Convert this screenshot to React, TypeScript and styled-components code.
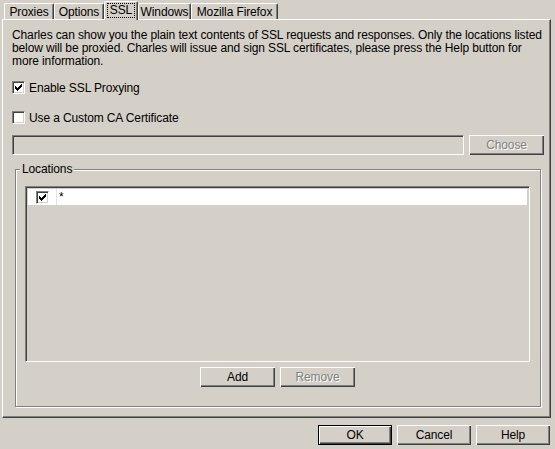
import React from "react";
import styled, { createGlobalStyle, css } from "styled-components";

const FACE = "#d4d0c8";
const SHADOW = "#808080";
const DARK = "#404040";

const GlobalStyle = createGlobalStyle`
  html, body {
    margin: 0;
    padding: 0;
    background: ${FACE};
  }
  body {
    font-family: "Liberation Sans", Arial, sans-serif;
    font-size: 12px;
    letter-spacing: -0.12px;
    color: #000;
  }
`;

const TABS = [
  { label: "Proxies", width: 50 },
  { label: "Options", width: 50 },
  { label: "SSL", width: 34, active: true },
  { label: "Windows", width: 53 },
  { label: "Mozilla Firefox", width: 87 },
];

const Window = styled.div`
  width: 555px;
  height: 449px;
  display: flex;
  flex-direction: column;
  overflow: hidden;
`;

const TabStrip = styled.div`
  display: flex;
  align-items: flex-end;
  height: 19px;
  padding-left: 4px;
  position: relative;
  z-index: 1;
`;

const Tab = styled.div<{ $active?: boolean; $w: number }>`
  box-sizing: border-box;
  width: ${(p) => p.$w}px;
  height: 16px;
  display: flex;
  align-items: center;
  justify-content: center;
  border-top: 1px solid #fff;
  border-left: 1px solid #fff;
  border-right: 1px solid ${DARK};
  border-radius: 2px 2px 0 0;
  box-shadow: inset -1px 0 0 ${SHADOW};
  background: ${FACE};
  white-space: nowrap;
  ${(p) =>
    p.$active &&
    css`
      height: 19px;
      margin-bottom: -1px;
      padding-bottom: 1px;
    `}
`;

const FocusText = styled.span`
  outline: 1px dotted #000;
  padding: 0 2px;
  line-height: 13px;
`;

const Panel = styled.div`
  box-sizing: border-box;
  margin-left: 2px;
  width: 549px;
  height: 399px;
  border-top: 1px solid #fff;
  border-left: 1px solid #fff;
  border-right: 1px solid ${DARK};
  border-bottom: 1px solid ${DARK};
  box-shadow: inset -1px -1px 0 ${SHADOW};
  padding: 9px 0 0 9px;
  display: flex;
  flex-direction: column;
`;

const Description = styled.p`
  margin: 0;
  width: 536px;
  line-height: 13px;
`;

const CheckRow = styled.label<{ $gap: number }>`
  display: flex;
  align-items: center;
  gap: 4px;
  height: 13px;
  margin-top: ${(p) => p.$gap}px;
`;

const Box = styled.span`
  box-sizing: border-box;
  width: 13px;
  height: 13px;
  flex: none;
  display: flex;
  align-items: center;
  justify-content: center;
  background: #fff;
  border-top: 1px solid ${SHADOW};
  border-left: 1px solid ${SHADOW};
  border-right: 1px solid #fff;
  border-bottom: 1px solid #fff;
  box-shadow: inset 1px 1px 0 ${DARK}, inset -1px -1px 0 ${FACE};
`;

const CheckMark = () => (
  <svg width="7" height="7" viewBox="0 0 7 7" shapeRendering="crispEdges">
    {[2, 3, 4, 3, 2, 1, 0].map((y, x) => (
      <rect key={x} x={x} y={y} width="1" height="3" fill="#000" />
    ))}
  </svg>
);

const Checkbox = ({ checked }: { checked?: boolean }) => (
  <Box>{checked && <CheckMark />}</Box>
);

const FieldRow = styled.div`
  display: flex;
  gap: 5px;
  margin-top: 11px;
  height: 20px;
`;

const Field = styled.div`
  box-sizing: border-box;
  width: 452px;
  height: 20px;
  border-top: 1px solid ${SHADOW};
  border-left: 1px solid ${SHADOW};
  border-right: 1px solid #fff;
  border-bottom: 1px solid #fff;
  box-shadow: inset 1px 1px 0 ${DARK}, inset -1px -1px 0 ${FACE};
  background: ${FACE};
`;

const Button = styled.button<{ $default?: boolean; $w?: number }>`
  box-sizing: border-box;
  width: ${(p) => p.$w ?? 75}px;
  height: 20px;
  padding: 0;
  background: ${FACE};
  border: none;
  font: inherit;
  letter-spacing: inherit;
  color: #000;
  box-shadow: inset 1px 1px 0 #fff, inset -1px -1px 0 ${DARK},
    inset -2px -2px 0 ${SHADOW};
  &:disabled {
    color: ${SHADOW};
    text-shadow: 1px 1px 0 #fff;
  }
  ${(p) =>
    p.$default &&
    css`
      border: 1px solid #000;
    `}
`;

const Group = styled.div`
  position: relative;
  box-sizing: border-box;
  margin: 14px 0 0 3px;
  width: 526px;
  height: 238px;
  border: 1px solid ${SHADOW};
  box-shadow: 1px 1px 0 #fff, inset 1px 1px 0 #fff;
  padding: 16px 0 0 9px;
  display: flex;
  flex-direction: column;
`;

const GroupTitle = styled.span`
  position: absolute;
  top: -7px;
  left: 4px;
  padding: 0 2px;
  line-height: 13px;
  background: ${FACE};
`;

const List = styled.div`
  box-sizing: border-box;
  width: 505px;
  height: 176px;
  border-top: 1px solid ${SHADOW};
  border-left: 1px solid ${SHADOW};
  border-right: 1px solid #fff;
  border-bottom: 1px solid #fff;
  box-shadow: inset 1px 1px 0 ${DARK}, inset -1px -1px 0 ${FACE};
  padding: 2px 2px 0 2px;
  background: ${FACE};
`;

const ListRow = styled.div`
  display: flex;
  height: 16px;
  background: #fff;
`;

const CheckCell = styled.div`
  box-sizing: border-box;
  width: 29px;
  display: flex;
  align-items: center;
  justify-content: center;
  padding-left: 1px;
  border-right: 1px solid #e4e2dc;
`;

const TextCell = styled.div`
  padding-left: 2px;
  display: flex;
  align-items: center;
`;

const ButtonRow = styled.div<{ $center?: boolean }>`
  display: flex;
  gap: 5px;
  justify-content: ${(p) => (p.$center ? "center" : "flex-end")};
`;

const GroupButtons = styled(ButtonRow)`
  margin-top: 5px;
  width: 505px;
`;

const Footer = styled(ButtonRow)`
  padding: 7px 5px 0 0;
`;

export default function App() {
  return (
    <Window>
      <GlobalStyle />
      <TabStrip>
        {TABS.map((t) => (
          <Tab key={t.label} $w={t.width} $active={t.active}>
            {t.active ? <FocusText>{t.label}</FocusText> : t.label}
          </Tab>
        ))}
      </TabStrip>
      <Panel>
        <Description>
          Charles can show you the plain text contents of SSL requests and
          responses. Only the locations listed below will be proxied. Charles
          will issue and sign SSL certificates, please press the Help button
          for more information.
        </Description>
        <CheckRow $gap={13}>
          <Checkbox checked />
          Enable SSL Proxying
        </CheckRow>
        <CheckRow $gap={17}>
          <Checkbox />
          Use a Custom CA Certificate
        </CheckRow>
        <FieldRow>
          <Field />
          <Button disabled>Choose</Button>
        </FieldRow>
        <Group>
          <GroupTitle>Locations</GroupTitle>
          <List>
            <ListRow>
              <CheckCell>
                <Checkbox checked />
              </CheckCell>
              <TextCell>*</TextCell>
            </ListRow>
          </List>
          <GroupButtons $center>
            <Button>Add</Button>
            <Button disabled>Remove</Button>
          </GroupButtons>
        </Group>
      </Panel>
      <Footer>
        <Button $default $w={74}>
          OK
        </Button>
        <Button $w={74}>Cancel</Button>
        <Button $w={74}>Help</Button>
      </Footer>
    </Window>
  );
}
